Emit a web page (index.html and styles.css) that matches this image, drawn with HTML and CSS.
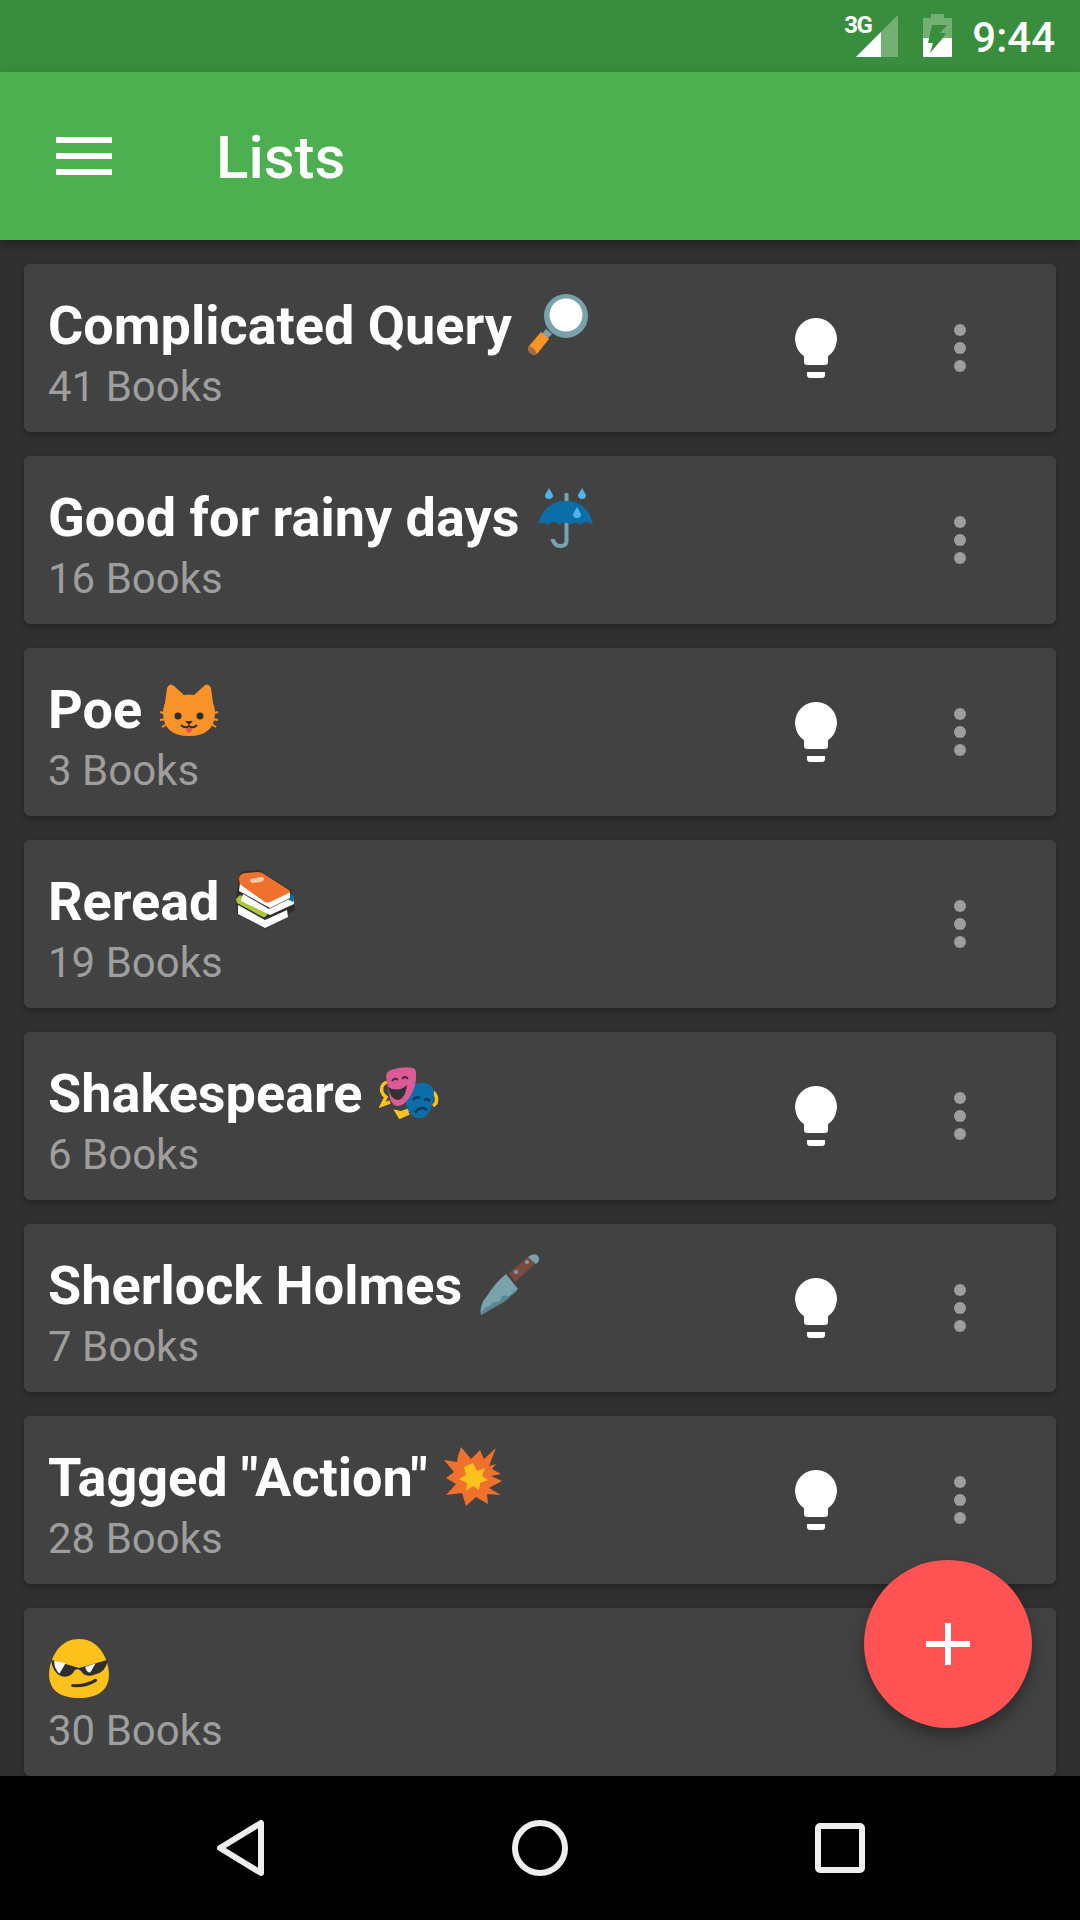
FILE: index.html

```html
<!DOCTYPE html>
<html lang="en">
<head>
    <meta charset="UTF-8">
    <meta name="viewport" content="width=device-width, initial-scale=1.0">
    <title>Lists</title>
    <link rel="stylesheet" href="styles.css">
</head>
<body>
    <svg class="defs" width="0" height="0">
        <defs>
            <g id="bulb">
                <path d="M21 0a21 21 0 0 0-12 38.200V44a3 3 0 0 0 3 3h18a3 3 0 0 0 3-3v-5.800A21 21 0 0 0 21 0z"/>
                <path d="M12 54h18v3a3 3 0 0 1-3 3H15a3 3 0 0 1-3-3z"/>
            </g>
            <g id="more">
                <circle cx="6" cy="6" r="6"/>
                <circle cx="6" cy="24" r="6"/>
                <circle cx="6" cy="42" r="6"/>
            </g>
        </defs>
    </svg>

    <div class="statusbar">
        <span class="net">3G</span>
        <svg class="signal" width="42" height="42" viewBox="0 0 42 42">
            <path d="M42 0V42H0z" fill="#fff" opacity=".3"/>
            <path d="M25 17V42H0z" fill="#fff"/>
        </svg>
        <svg class="battery" width="29" height="43" viewBox="0 0 29 43">
            <path d="M8 0h13v4h8v20H0V4h8z" fill="#fff" opacity=".3"/>
            <path d="M0 24h29v19H0z" fill="#fff"/>
            <path d="M9 11H24L17 19H23L20 24L7 39L10 29H5z" fill="#388e3c"/>
        </svg>
        <span class="clock">9:44</span>
    </div>

    <header class="toolbar">
        <div class="burger"><i></i><i></i><i></i></div>
        <h1>Lists</h1>
    </header>

    <main class="lists">
        <div class="card">
            <div class="card-text">
                <div class="name">Complicated Query
                    <svg class="emoji" viewBox="0 0 60 62">
                        <path d="M18 35l6 5-5 5-5-5z" fill="#78a3ad"/>
                        <circle cx="38" cy="22" r="22" fill="#78a3ad"/>
                        <circle cx="38" cy="21" r="16.500" fill="#fff"/>
                        <path d="M13 38l8 7L9 60q-4 2-7-1t-1-7z" fill="#f79329"/>
                        <path d="M1 52q5 1 8 8-4 2-7-1t-1-7z" fill="#a56a43"/>
                    </svg>
                </div>
                <div class="count">41 Books</div>
            </div>
            <svg class="bulb" width="42" height="60"><use href="#bulb"/></svg>
            <svg class="more" width="12" height="48"><use href="#more"/></svg>
        </div>

        <div class="card">
            <div class="card-text">
                <div class="name">Good for rainy days
                    <svg class="emoji" viewBox="0 0 60 62">
                        <path d="M28.500 7h4v48q0 7-8 7t-10-9h4.500q1 5 5.500 5t4-4z" fill="#78a3ad"/>
                        <path d="M30 15c15 0 25 10 27 24-4-4-9-4-12 0-3-3-8-3-11 0-3-3-8-3-11 0-3-4-8-4-11 0-4-3-7-3-9.500 0 2-14 12-24 27.500-24z" fill="#0b6ea8"/>
                        <path d="M13 2l4 7a4 4 0 1 1-8 0z" fill="#4fb4e6"/>
                        <path d="M46 2l4 7a4 4 0 1 1-8 0z" fill="#4fb4e6"/>
                        <path d="M41 21l4 7a4 4 0 1 1-8 0z" fill="#4fb4e6"/>
                    </svg>
                </div>
                <div class="count">16 Books</div>
            </div>
            <svg class="more" width="12" height="48"><use href="#more"/></svg>
        </div>

        <div class="card">
            <div class="card-text">
                <div class="name">Poe
                    <svg class="emoji" viewBox="0 0 60 62">
                        <path d="M8 10q3-6 7-2l10 9q5-1 10 0l10-9q4-4 7 2l2 15q2 5 2 9 0 24-26 24T4 34q0-4 2-9z" fill="#f79329"/>
                        <path d="M1 34l7 2M1 42l7-1M3 49l5-3M59 34l-7 2M59 42l-7-1M57 49l-5-3" stroke="#f79329" stroke-width="2"/>
                        <circle cx="19" cy="38" r="3.500" fill="#2f2f2f"/>
                        <circle cx="41" cy="38" r="3.500" fill="#2f2f2f"/>
                        <path d="M26 43h8l-4 4z" fill="#2f2f2f"/>
                        <path d="M22 47q4 4 8 1 4 3 8-1" fill="none" stroke="#2f2f2f" stroke-width="2"/>
                        <path d="M27 50h6q0 5-3 5t-3-5z" fill="#ed4c5c"/>
                    </svg>
                </div>
                <div class="count">3 Books</div>
            </div>
            <svg class="bulb" width="42" height="60"><use href="#bulb"/></svg>
            <svg class="more" width="12" height="48"><use href="#more"/></svg>
        </div>

        <div class="card">
            <div class="card-text">
                <div class="name">Reread
                    <svg class="emoji" viewBox="0 0 60 62">
                        <path d="M0 27L3 8q0-6 6-7l14-1 32 20 4 20-30 19L1 43z" fill="#2f2f2f"/>
                        <path d="M2 35l27 15 22-10 1 7-23 11L2 44z" fill="#fff"/>
                        <path d="M0 29l4-4 30 16-4 5q-1 2-3 1L1 33z" fill="#a9c93a"/>
                        <path d="M7 24l26 15 24-12 1 7-24 11L5 31z" fill="#fff"/>
                        <path d="M51 22l7 4-1 6-6-3z" fill="#0b6ea8"/>
                        <path d="M4 13l30 17 20-9v7L34 38 3 21z" fill="#fff"/>
                        <path d="M3 9q0-5 6-6l13-1q3 0 6 2l25 16q2 2 0 3L34 32q-2 1-5 0L5 15q-2-2-2-6z" fill="#f0702e"/>
                        <path d="M15 9l10-2q3 0 3 2t-3 3l-9 1q-3-2-1-4z" fill="#f9c9aa"/>
                    </svg>
                </div>
                <div class="count">19 Books</div>
            </div>
            <svg class="more" width="12" height="48"><use href="#more"/></svg>
        </div>

        <div class="card">
            <div class="card-text">
                <div class="name">Shakespeare
                    <svg class="emoji" viewBox="0 0 60 62">
                        <path d="M8 20q-7 3-5 10 1 3 4 5l-4 8 8-3M30 48l-8 3-4-1 3 5 9-4M54 30q5 4 3 11l-3 3" fill="none" stroke="#fcc21b" stroke-width="3.500"/>
                        <path d="M32 25q6-5 14-4 9 2 9 10 0 14-7 22-4 4-10 3-9-3-11-14-1-10 5-17z" fill="#0b6ea8"/>
                        <path d="M12 8q11-4 22-2 3 1 3 5 1 14-7 25-5 8-12 8-7-1-8-13L7 14q1-5 5-6z" fill="#dc5a97"/>
                        <path d="M9 25q10 6 19-2-1 12-8 15-8 1-11-13z" fill="#333"/>
                        <path d="M13 19q3-4 6-1M23 17q3-4 6 0" fill="none" stroke="#333" stroke-width="2"/>
                        <path d="M34 38q3-4 7-2M45 38q3-2 6 1M36 51q5-8 12-3" fill="none" stroke="#0a3b5c" stroke-width="2.500"/>
                    </svg>
                </div>
                <div class="count">6 Books</div>
            </div>
            <svg class="bulb" width="42" height="60"><use href="#bulb"/></svg>
            <svg class="more" width="12" height="48"><use href="#more"/></svg>
        </div>

        <div class="card">
            <div class="card-text">
                <div class="name">Sherlock Holmes
                    <svg class="emoji" viewBox="0 0 60 62">
                        <path d="M27 20l12 15-13 11L2 61q-2-10 6-19 8-13 19-22z" fill="#78a3ad"/>
                        <path d="M3 58q3-6 8-6 2-4 6-4t5-4 6-2 7-6l3 1-13 11L2 61z" fill="#5b8792"/>
                        <path d="M30 19L49 3l8 6-21 19z" fill="#7a4a3f"/>
                        <path d="M49 3q5-4 9-2 3 3 2 6l-3 3z" fill="#78a3ad"/>
                        <circle cx="37" cy="18" r="2" fill="#78a3ad"/>
                        <circle cx="48" cy="8" r="2" fill="#78a3ad"/>
                    </svg>
                </div>
                <div class="count">7 Books</div>
            </div>
            <svg class="bulb" width="42" height="60"><use href="#bulb"/></svg>
            <svg class="more" width="12" height="48"><use href="#more"/></svg>
        </div>

        <div class="card">
            <div class="card-text">
                <div class="name">Tagged "Action"
                    <svg class="emoji" viewBox="0 0 60 62">
                        <path d="M17 1L27 13L36 4L40 13L52 2L45 20L52 18L48 23L57 28L47 30L58 35L45 42L57 49L43 48L44 58L32 51L22 60L18 47L2 49L12 38L2 32L10 26L0 14L13 16L14 10z" fill="#f0702e"/>
                        <path d="M29 17L33 25L41 22L38 30L44 34L36 37L35 44L29 40L22 45L23 37L15 33L22 29L20 21z" fill="#fcc21b"/>
                    </svg>
                </div>
                <div class="count">28 Books</div>
            </div>
            <svg class="bulb" width="42" height="60"><use href="#bulb"/></svg>
            <svg class="more" width="12" height="48"><use href="#more"/></svg>
        </div>

        <div class="card">
            <div class="card-text">
                <div class="name">
                    <svg class="emoji emoji-first" viewBox="1 3 58 60">
                        <path d="M30 4C14 4 5 17 2 30-1 44 2 61 30 61s31-17 28-31C55 17 46 4 30 4z" fill="#fcc21b"/>
                        <path d="M3 24L30 32 58 24Q56 36 46 38 36 42 32 35L29 33 26 34Q22 42 13 40 4 36 3 24z" fill="#2f2f2f"/>
                        <path d="M6 25L17 27.500 11 37.500Q6 33 6 25z" fill="#fff"/>
                        <path d="M36 31L46 27.500 41 36.500Q37 36 36 31z" fill="#fff"/>
                        <path d="M24 49q12 1 22-5" fill="none" stroke="#2f2f2f" stroke-width="3" stroke-linecap="round"/>
                    </svg>
                </div>
                <div class="count">30 Books</div>
            </div>
            <svg class="more" width="12" height="48"><use href="#more"/></svg>
        </div>
    </main>

    <button class="fab"><i></i><i></i></button>

    <footer class="navbar">
        <svg width="48" height="58" viewBox="0 0 48 58"><path d="M45 4v50L4 29z" fill="none" stroke="#eee" stroke-width="6" stroke-linejoin="round"/></svg>
        <svg width="58" height="58" viewBox="0 0 58 58"><circle cx="29" cy="29" r="25" fill="none" stroke="#eee" stroke-width="6"/></svg>
        <svg width="50" height="50" viewBox="0 0 50 50"><rect x="3" y="3" width="44" height="44" rx="2" fill="none" stroke="#eee" stroke-width="6"/></svg>
    </footer>
</body>
</html>
```

FILE: styles.css

```css
* {
    box-sizing: border-box;
}

body {
    margin: 0;
    width: 1080px;
    height: 1920px;
    overflow: hidden;
    position: relative;
    display: flex;
    flex-direction: column;
    background-color: #303030;
    font-family: Roboto, sans-serif;
    color: #fff;
}

.defs {
    position: absolute;
}

.statusbar {
    height: 72px;
    flex: none;
    background-color: #388e3c;
    display: flex;
    align-items: flex-start;
    justify-content: flex-end;
    padding-right: 25px;
}

.net {
    font-size: 24px;
    font-weight: 700;
    line-height: 24px;
    margin-top: 13px;
    margin-right: -15px;
    letter-spacing: -1.500px;
}

.signal {
    margin-top: 15px;
}

.battery {
    margin-top: 14px;
    margin-left: 25px;
}

.clock {
    font-size: 42px;
    font-weight: 500;
    line-height: 50px;
    margin-top: 13px;
    margin-left: 20px;
}

.toolbar {
    height: 168px;
    flex: none;
    background-color: #4caf50;
    display: flex;
    align-items: center;
    padding-left: 56px;
    box-shadow: 0 4px 10px rgba(0, 0, 0, 0.3);
    position: relative;
}

.burger {
    width: 56px;
    height: 38px;
    display: flex;
    flex-direction: column;
    justify-content: space-between;
}

.burger i {
    display: block;
    height: 6px;
    background-color: #fff;
}

.toolbar h1 {
    margin: 2px 0 0 104px;
    font-size: 60px;
    font-weight: 500;
}

.lists {
    flex: 1;
    min-height: 0;
    overflow: hidden;
    padding: 24px 24px 0;
    display: flex;
    flex-direction: column;
    gap: 24px;
}

.card {
    height: 168px;
    flex: none;
    background-color: #424242;
    border-radius: 6px;
    box-shadow: 0 3px 6px rgba(0, 0, 0, 0.3);
    display: flex;
    align-items: center;
    padding: 0 90px 0 24px;
}

.card-text {
    flex: 1;
    min-width: 0;
    margin-top: 7px;
}

.name {
    font-size: 54px;
    font-weight: 700;
    line-height: 68px;
    height: 70px;
    white-space: nowrap;
}

.emoji {
    width: 60px;
    height: 62px;
    vertical-align: -12px;
    margin-left: 3px;
}

.emoji-first {
    margin-left: 1px;
}

.count {
    font-size: 42px;
    line-height: 50px;
    color: #9e9e9e;
}

.bulb {
    fill: #fff;
    flex: none;
    margin-right: 117px;
}

.more {
    fill: #9e9e9e;
    flex: none;
}

.fab {
    position: absolute;
    left: 864px;
    top: 1560px;
    width: 168px;
    height: 168px;
    border: none;
    border-radius: 50%;
    background-color: #ff5252;
    box-shadow: 0 8px 16px rgba(0, 0, 0, 0.35);
}

.fab i {
    position: absolute;
    background-color: #fff;
}

.fab i:first-child {
    left: 62px;
    top: 81px;
    width: 44px;
    height: 6px;
}

.fab i:last-child {
    left: 81px;
    top: 63px;
    width: 6px;
    height: 42px;
}

.navbar {
    height: 144px;
    flex: none;
    background-color: #000;
    display: grid;
    grid-template-columns: repeat(3, 300px);
    justify-content: center;
    justify-items: center;
    align-items: center;
    position: relative;
}
```
